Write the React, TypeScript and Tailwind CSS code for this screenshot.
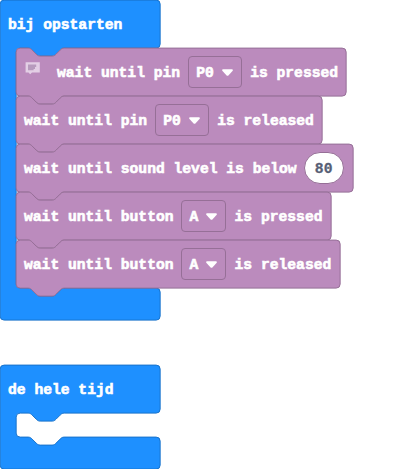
import type { ReactNode } from "react";

const tabDown = "c2 0 3 1 4 2l4 4c1 1 2 2 4 2h12c2 0 3 -1 4 -2l4 -4c1 -1 2 -2 4 -2";
const tabBack = "c-2 0 -3 1 -4 2l-4 4c-1 1 -2 2 -4 2h-12c-2 0 -3 -1 -4 -2l-4 -4c-1 -1 -2 -2 -4 -2";

function statementPath(w: number) {
  return `M0 4a4 4 0 0 1 4 -4H12${tabDown}H${w - 4}a4 4 0 0 1 4 4V44a4 4 0 0 1 -4 4H48${tabBack}H4a4 4 0 0 1 -4 -4Z`;
}

function containerPath(slot: number) {
  const b = 48 + slot;
  return `M0 4a4 4 0 0 1 4 -4H156a4 4 0 0 1 4 4V44a4 4 0 0 1 -4 4H64${tabBack}H20a4 4 0 0 0 -4 4V${b - 4}a4 4 0 0 0 4 4H28${tabDown}H156a4 4 0 0 1 4 4V${b + 28}a4 4 0 0 1 -4 4H4a4 4 0 0 1 -4 -4Z`;
}

function Shape({ d, fill, stroke }: { d: string; fill: string; stroke: string }) {
  return (
    <svg className="absolute inset-0 h-full w-full overflow-visible" aria-hidden="true">
      <path d={d} transform="translate(.15 .1)" fill={fill} stroke={stroke} />
    </svg>
  );
}

function Label({ children }: { children: ReactNode }) {
  return <span className="relative whitespace-pre pt-[2px]">{children}</span>;
}

function Container({ title, slot, children }: { title: string; slot: number; children?: ReactNode }) {
  return (
    <section className="relative w-40 pb-8">
      <Shape d={containerPath(slot)} fill="#1e90ff" stroke="#1873cc" />
      <header className="flex h-12 items-center pl-2">
        <Label>{title}</Label>
      </header>
      <div className="flex flex-col items-start pl-4" style={{ height: slot }}>
        {children}
      </div>
    </section>
  );
}

function Statement({ width, children }: { width: number; children: ReactNode }) {
  return (
    <div className="relative flex h-12 shrink-0 items-center gap-2 pl-2" style={{ width }}>
      <Shape d={statementPath(width)} fill="#bb8bbd" stroke="#966f97" />
      {children}
    </div>
  );
}

function Dropdown({ value }: { value: string }) {
  return (
    <span className={`relative -ml-[0.5px] mr-[0.5px] flex h-8 shrink-0 items-center justify-between rounded border border-[#966f97] pl-[7.5px] pr-2 ${value.length > 1 ? "w-[54px]" : "w-[45px]"}`}>
      <span className="pt-[2px]">{value}</span>
      <svg width="11" height="7" viewBox="0 0 11 7" aria-hidden="true">
        <path d="M1.2 .3H9.8C11 .3 11.2 1.2 10.5 2L6.6 6.2Q5.5 7.2 4.4 6.2L.5 2C-.2 1.2 0 .3 1.2 .3Z" fill="#fff" />
      </svg>
    </span>
  );
}

function Comment() {
  return (
    <svg className="relative -mt-2 ml-[1px] mr-[9px] shrink-0" width="15" height="13" viewBox="0 0 15 13" aria-hidden="true">
      <path d="M.6 .2H14.8V10.5H7L5.2 12.2L3.5 10.5H.6Z" fill="#e3cfe5" />
      <path d="M3 2.5H11.2V5H10V7H8.6V8.2H3Z" fill="#b79bbd" />
    </svg>
  );
}

export default function App() {
  return (
    <main className="flex h-[469px] w-[405px] flex-col gap-[45px] overflow-hidden bg-white font-['Liberation_Mono',monospace] text-[14.67px] leading-4 font-bold text-white [-webkit-text-stroke:0.6px]">
      <Container title="bij opstarten" slot={240}>
        <Statement width={330}>
          <Comment />
          <Label>wait until pin</Label>
          <Dropdown value="P0" />
          <Label>is pressed</Label>
        </Statement>
        <Statement width={306}>
          <Label>wait until pin</Label>
          <Dropdown value="P0" />
          <Label>is released</Label>
        </Statement>
        <Statement width={337}>
          <Label>wait until sound level is below</Label>
          <span className="relative -ml-px flex h-8 w-10 shrink-0 items-center justify-center rounded-full border border-[#966f97] bg-white pt-[2px] text-[#575e75] [-webkit-text-stroke:0.3px]">
            80
          </span>
        </Statement>
        <Statement width={315}>
          <Label>wait until button</Label>
          <Dropdown value="A" />
          <Label>is pressed</Label>
        </Statement>
        <Statement width={324}>
          <Label>wait until button</Label>
          <Dropdown value="A" />
          <Label>is released</Label>
        </Statement>
      </Container>
      <Container title="de hele tijd" slot={24} />
    </main>
  );
}
